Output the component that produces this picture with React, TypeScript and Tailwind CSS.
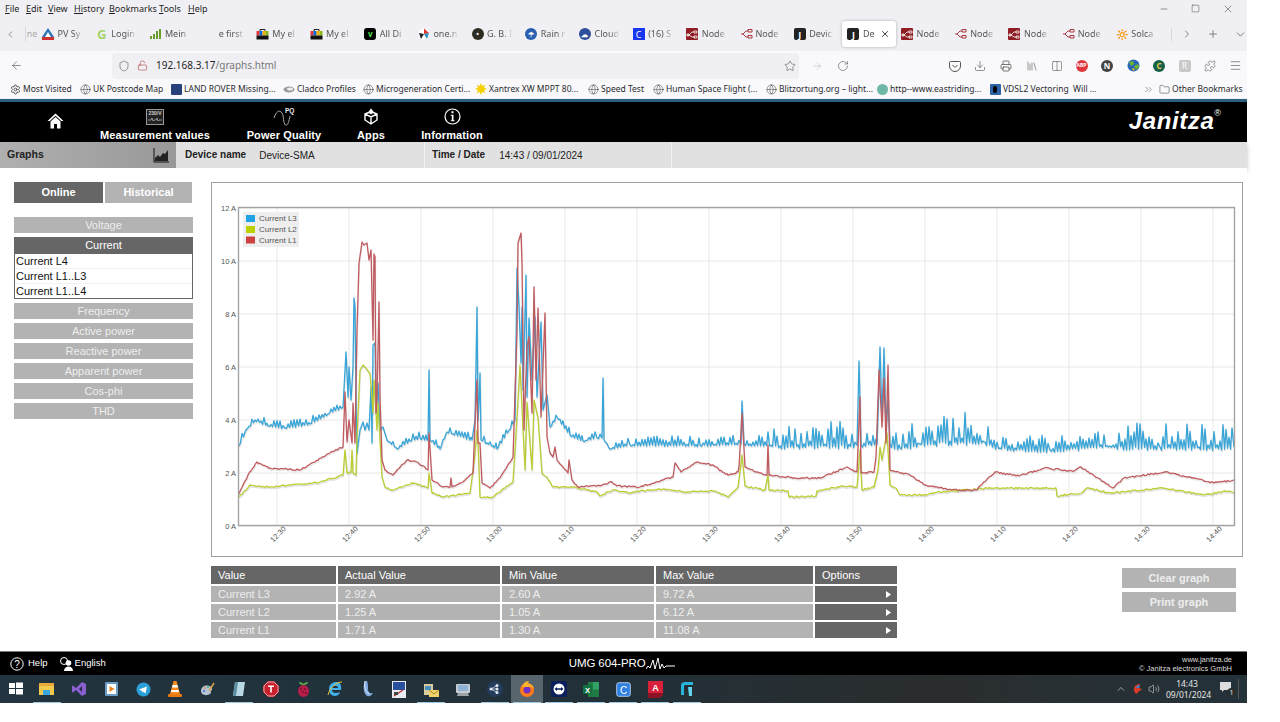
import React from "react";
import { ArrowLeft, ArrowRight, ChevronDown, ChevronLeft, ChevronRight, ChevronUp, ChevronsRight, Download, Folder, Globe, Menu, Minus, Plus, Printer, RotateCw, Settings, Shield, Square, Star, Volume2, X, Puzzle, LockOpen, Columns2, Library } from "lucide-react";

type P = [number, number];

function rng(seed: number) {
  let s = seed;
  return () => {
    s = (s * 16807) % 2147483647;
    return (s - 1) / 2147483646;
  };
}
function lerp(k: P[], x: number) {
  for (let i = 1; i < k.length; i++) {
    if (x <= k[i][0]) {
      const [a, b] = k[i - 1];
      const [c, d] = k[i];
      return c === a ? d : b + ((d - b) * (x - a)) / (c - a);
    }
  }
  return k[k.length - 1][1];
}
function series(k: P[], seed: number, amp: (x: number, i: number) => number, mode: "both" | "up") {
  const r = rng(seed);
  const out: string[] = [];
  for (let i = 1; i < k.length; i++) {
    const [a, b] = k[i - 1];
    const [c, d] = k[i];
    out.push(`${a},${b.toFixed(1)}`);
    if (c - a > 4) {
      let n = 0;
      for (let x = a + 1.5; x < c - 0.5; x += 1.5) {
        n++;
        const base = b + ((d - b) * (x - a)) / (c - a);
        const A = amp(x, n);
        const dy = mode === "up" ? (n % 2 === 0 ? -A * r() : A * 0.15 * r()) : (r() - 0.5) * A;
        out.push(`${x.toFixed(1)},${(base + dy).toFixed(1)}`);
      }
    }
  }
  const l = k[k.length - 1];
  out.push(`${l[0]},${l[1]}`);
  return out.join(" ");
}

const blueK: P[] = [[239,446],[246,430],[255,420],[268,426],[285,428],[310,424],[328,414],[343,407],[346,352],[348,397],[349,367],[351,400],[353,367],[354,298],[355,307],[356,397],[357,453],[360,430],[363,422],[365,430],[367,423],[369,430],[371,387],[372,443],[373,345],[375,343],[376,413],[378,383],[380,430],[383,427],[387,440],[397,449],[410,441],[420,438],[427,440],[428,440],[429,370],[430,440],[440,449],[447,432],[472,440],[475,420],[477,307],[478,420],[479,400],[480,373],[481,440],[487,443],[497,449],[513,424],[515,420],[517,268],[519,307],[521,363],[522,307],[523,390],[526,275],[527,397],[529,318],[532,380],[535,317],[537,397],[541,322],[543,410],[547,395],[550,427],[557,417],[570,435],[583,441],[597,438],[602,438],[603,378],[604,440],[610,449],[630,445],[700,445],[741,444],[742,401],[744,444],[780,446],[857,445],[859,361],[861,445],[877,444],[880,347],[882,420],[884,348],[886,430],[888,400],[890,445],[900,448],[920,444],[950,441],[985,442],[1000,448],[1050,450],[1110,446],[1160,447],[1234,447]];
const ampBlue = (x: number) => (x < 640 ? 7 : lerp([[640,10],[760,10],[770,24],[850,24],[870,10],[910,22],[950,32],[985,26],[1000,18],[1110,18],[1115,24],[1234,24]], x));
const redK: P[] = [[239,494],[248,475],[257,462],[270,468],[300,470],[330,453],[343,447],[345,392],[347,442],[349,420],[352,443],[353,403],[355,443],[357,330],[359,263],[362,242],[364,245],[367,243],[369,260],[371,250],[373,340],[374,254],[375,257],[376,413],[377,397],[379,302],[380,397],[382,460],[385,470],[393,475],[407,460],[417,462],[428,470],[429,433],[432,480],[443,487],[450,487],[451,478],[452,487],[463,482],[467,478],[473,473],[475,423],[477,380],[478,443],[480,443],[482,483],[490,488],[500,478],[513,457],[517,330],[518,243],[521,233],[522,263],[524,430],[527,347],[529,337],[532,413],[534,287],[536,380],[538,308],[541,417],[545,313],[547,437],[550,453],[553,457],[555,447],[557,460],[568,473],[569,460],[572,480],[578,487],[597,486],[612,482],[617,486],[640,487],[663,480],[673,477],[675,463],[681,472],[697,462],[712,465],[728,475],[738,472],[739,467],[742,413],[745,467],[757,472],[767,475],[768,445],[769,475],[794,478],[820,478],[847,467],[857,472],[860,397],[861,473],[874,472],[876,457],[879,370],[882,427],[884,378],[886,443],[888,365],[890,470],[910,475],[925,485],[952,490],[976,490],[995,472],[1019,476],[1044,468],[1074,471],[1081,467],[1113,488],[1124,478],[1165,472],[1214,483],[1234,480]];
const greenK: P[] = [[239,497],[250,485],[270,487],[290,485],[320,482],[343,475],[345,450],[347,473],[351,472],[352,450],[353,473],[356,475],[357,437],[360,370],[363,365],[370,373],[373,413],[374,380],[377,430],[378,403],[382,477],[385,487],[393,490],[413,483],[428,488],[429,473],[432,493],[443,497],[470,493],[474,463],[477,430],[478,443],[480,497],[493,497],[513,482],[517,417],[520,365],[523,430],[525,470],[527,402],[532,470],[534,400],[538,418],[542,473],[547,477],[553,487],[573,487],[597,492],[600,496],[613,490],[630,493],[640,491],[663,489],[687,492],[714,491],[728,497],[738,487],[742,455],[745,486],[765,490],[768,475],[769,490],[788,491],[789,497],[816,496],[817,491],[843,486],[857,487],[860,450],[862,490],[874,487],[878,470],[880,447],[882,460],[887,433],[890,485],[896,488],[900,495],[927,495],[937,492],[992,488],[1056,488],[1057,496],[1081,493],[1087,488],[1111,493],[1163,488],[1204,495],[1226,491],[1234,493]];
const blue = series(blueK, 12345, ampBlue, "up");
const red = series(redK, 777, () => 1.6, "both");
const green = series(greenK, 4242, () => 1.6, "both");

const gridX = [277,349,421,493,565,637,709,781,853,925,997,1069,1141,1213];
const labels = ["12:30","12:40","12:50","13:00","13:10","13:20","13:30","13:40","13:50","14:00","14:10","14:20","14:30","14:40"];
const gridY: [number, string][] = [[208,"12 A"],[261,"10 A"],[314,"8 A"],[367,"6 A"],[420,"4 A"],[473,"2 A"],[526,"0 A"]];

function Chart() {
  return (
    <svg width="1030" height="373" viewBox="212 183 1030 373" className="block">
      {gridX.map((x) => <line key={x} x1={x} x2={x} y1={208} y2={525} stroke="#e8e8e8" />)}
      {gridY.map(([y]) => <line key={y} x1={238} x2={1234} y1={y} y2={y} stroke="#e8e8e8" />)}
      <g fill="none" strokeLinejoin="round">
        <polyline points={blue} transform="translate(0.5,1.5)" stroke="#000" strokeOpacity="0.12" strokeWidth="1.4" />
        <polyline points={green} transform="translate(0.5,1.5)" stroke="#000" strokeOpacity="0.12" strokeWidth="1.4" />
        <polyline points={red} transform="translate(0.5,1.5)" stroke="#000" strokeOpacity="0.08" strokeWidth="1.4" />
        <polyline points={blue} stroke="#38a5d8" strokeWidth="1.3" />
        <polyline points={green} stroke="#bccd33" strokeWidth="1.3" />
        <polyline points={red} stroke="#bf5a5e" strokeWidth="1.3" />
      </g>
      <rect x="238.5" y="207.5" width="996" height="318" fill="none" stroke="#a3a3a3" strokeWidth="1.4" />
      <g fontFamily="'Liberation Sans', sans-serif" fontSize="7.5" fill="#555">
        {gridY.map(([y, t]) => <text key={t} x="236" y={y + 2.5} textAnchor="end">{t}</text>)}
        {gridX.map((x, i) => <text key={x} x={x + 2} y={538} textAnchor="middle" transform={`rotate(-45 ${x} 536)`}>{labels[i]}</text>)}
      </g>
      <rect x="243" y="212" width="56" height="35" fill="#eeeeee" />
      {[["#1fa5e6","Current L3",218],["#bdd000","Current L2",229],["#cc4040","Current L1",239.5]].map(([c, t, y]) => (
        <g key={t as string}>
          <rect x="246" y={(y as number) - 3} width="9" height="7" fill={c as string} />
          <text x="259" y={(y as number) + 3} fontFamily="'Liberation Sans', sans-serif" fontSize="8" fill="#555">{t as string}</text>
        </g>
      ))}
    </svg>
  );
}

const Nodered = () => (
  <svg width="12" height="12" viewBox="0 0 12 12"><rect width="12" height="12" rx="1" fill="#8f1d24" /><path d="M1 7h2l3-3h2M3 7l3 2h3M8 3h3v2H8zM1 6h2v2H1zM8 8h3v2H8z" stroke="#fff" strokeWidth=".8" fill="none" /></svg>
);
const NodeLine = () => (
  <svg width="13" height="12" viewBox="0 0 13 12"><path d="M1 6h2l3-3h2M3 6l3 3h2M8 1.5h4v2.5H8zM8 7.5h4V10H8z" stroke="#a3242c" strokeWidth=".9" fill="none" /></svg>
);
const J = () => (
  <span className="flex h-3 w-3 items-center justify-center rounded-[2px] bg-[#222] text-[9px] font-bold leading-none text-white">J</span>
);
const Bag = () => (
  <svg width="13" height="12" viewBox="0 0 13 12"><path d="M4 3V1.5h5V3" stroke="#222" fill="none" /><rect x="0.5" y="3" width="3" height="4.5" fill="#e53238" /><rect x="3.5" y="3" width="3" height="4.5" fill="#0064d2" /><rect x="6.5" y="3" width="3" height="4.5" fill="#f5af02" /><rect x="9.5" y="3" width="3" height="4.5" fill="#86b817" /><rect x="0.5" y="7.5" width="12" height="4" fill="#111" /></svg>
);
const Round = ({ c, i }: { c: string; i?: string }) => (
  <span className="flex h-3 w-3 items-center justify-center rounded-full text-[7px] font-bold leading-none text-white" style={{ background: c }}>{i}</span>
);

const tabs: [React.ReactNode, string][] = [
  [<svg width="12" height="12" viewBox="0 0 12 12"><path d="M6 0l6 9H0z" fill="#2c72b8" /><path d="M0 9h12v3H0z" fill="#d22f2f" /><path d="M6 4l3 5H3z" fill="#fff" /></svg>, "PV Sy"],
  [<span className="text-[13px] font-bold leading-none text-[#a3d36a]">G</span>, "Login"],
  [<svg width="12" height="12" viewBox="0 0 12 12"><path d="M1 8h2v3H1zM4 6h2v5H4zM7 3h2v8H7zM10 1h2v10h-2z" fill="#6a9e2c" /></svg>, "Mein"],
  [<span className="w-3" />, "e first"],
  [<Bag />, "My el"],
  [<Bag />, "My el"],
  [<span className="flex h-3 w-3 items-center justify-center rounded-[3px] bg-black text-[8px] font-bold leading-none text-[#52e052]">v</span>, "All Di"],
  [<svg width="12" height="12" viewBox="0 0 12 12"><circle cx="6" cy="6" r="5.5" fill="#fff" /><path d="M6 .5L11 5 6 6z" fill="#e0362c" /><path d="M1 5l5 1-3 5z" fill="#222" /><path d="M6 6l5-1-2 6z" fill="#2b8fbf" /></svg>, "one.n"],
  [<Round c="#2c2c22" i="•" />, "G. B. I"],
  [<Round c="#2a5fb0" i="☂" />, "Rain r"],
  [<Round c="#2c4f9a" i="☁" />, "Cloud"],
  [<span className="flex h-3 w-3 items-center justify-center bg-[#1736f0] text-[9px] leading-none text-white">C</span>, "(16) S"],
  [<Nodered />, "Node"],
  [<NodeLine />, "Node"],
  [<J />, "Devic"],
  [<J />, "De"],
  [<Nodered />, "Node"],
  [<NodeLine />, "Node"],
  [<Nodered />, "Node"],
  [<NodeLine />, "Node"],
  [<span className="text-[10px] leading-none">🔆</span>, "Solca"],
];

const chromeFont = "font-['Noto_Sans',sans-serif]";

function TopBar() {
  return (
    <div className={`${chromeFont} text-[#1f1f24]`}>
      <div className="flex h-[17px] items-center bg-[#f0f0f4] pl-[5px] text-[9px]">
        {[["F","ile",21],["E","dit",22],["V","iew",26],["Hi","story",35],["B","ookmarks",50],["T","ools",29],["H","elp",24]].map(([a, b, w]) => (
          <span key={b as string} style={{ width: w as number }}><span className="underline">{a}</span>{b}</span>
        ))}
        <div className="ml-auto flex items-center gap-[22px] pr-[13px] text-[#333]">
          <Minus size={10} strokeWidth={1.2} />
          <Square size={9} strokeWidth={1.2} />
          <X size={12} strokeWidth={1} />
        </div>
      </div>
      <div className="flex h-[34px] items-center bg-[#f0f0f4] text-[9px]">
        <ChevronLeft size={13} strokeWidth={1.3} className="ml-[5px] text-[#444]" />
        <span className="ml-[9px] w-[20px] border-l border-[#d8d8dc] pl-[1px] text-[#aaa]">ne</span>
        <div className="flex">
          {tabs.map(([ic, t], i) => (
            <div key={i} className={i === 15 ? "-ml-[5px] mr-[5px] flex h-[26px] w-[53.7px] items-center gap-[3px] rounded-[3px] bg-white pl-[5px] shadow-[0_0_3px_rgba(0,0,0,0.3)]" : "flex h-[26px] w-[53.7px] items-center gap-[3px]"}>
              <span className="flex w-[13px] shrink-0 items-center justify-center">{ic}</span>
              <span className="w-[26px] overflow-hidden whitespace-nowrap text-[#555] [mask-image:linear-gradient(90deg,#000_60%,transparent)]">{t}</span>
              {i === 15 && <X size={10} strokeWidth={2} className="-ml-[12px] shrink-0 text-[#222]" />}
            </div>
          ))}
        </div>
        <div className="ml-[2px] flex items-center border-l border-[#d8d8dc] pl-[9px] text-[#444]">
          <ChevronRight size={12} strokeWidth={1.3} />
          <Plus size={12} strokeWidth={1.2} className="ml-[14px]" />
          <ChevronDown size={13} strokeWidth={1.2} className="ml-[15px]" />
        </div>
      </div>
      <div className="flex h-[29px] items-center bg-[#f9f9fb] text-[#555]">
        <ArrowLeft size={13} strokeWidth={1.2} className="ml-[10px]" />
        <div className="ml-[89px] flex h-[26px] w-[688px] items-center rounded-[4px] bg-[#f0f0f4] text-[10px]">
          <Shield size={12} strokeWidth={1.2} className="ml-[6px]" />
          <LockOpen size={11} strokeWidth={1.2} className="ml-[7px] text-[#a33]" />
          <span className="ml-[8px] text-[#1f1f24]">192.168.3.17<span className="text-[#777]">/graphs.html</span></span>
          <Star size={12} strokeWidth={1.2} className="ml-auto mr-[3px]" />
        </div>
        <ArrowRight size={12} strokeWidth={1.2} className="ml-[12px] text-[#bbb]" />
        <RotateCw size={12} strokeWidth={1.2} className="ml-[14px]" />
        <div className="ml-[93px] flex items-center">
          <span className="flex w-[25px] justify-center"><svg width="12" height="12" viewBox="0 0 12 12"><path d="M1.5 1.5h9a1 1 0 011 1V6a5.5 5.5 0 01-11 0V2.500a1 1 0 011-1zM3.500 5L6 7.500 8.500 5" fill="none" stroke="#555" /></svg></span>
          <span className="flex w-[26px] justify-center"><Download size={12} strokeWidth={1.3} /></span>
          <span className="flex w-[26px] justify-center"><Printer size={12} strokeWidth={1.6} /></span>
          <span className="flex w-[25px] justify-center"><Library size={12} strokeWidth={1.2} /></span>
          <span className="flex w-[25px] justify-center"><Columns2 size={12} strokeWidth={1.2} /></span>
          <span className="flex w-[25px] justify-center"><span className="flex h-[12px] w-[12px] items-center justify-center rounded-full bg-[#e0343c] text-[5px] font-bold text-white">ABP</span></span>
          <span className="flex w-[26px] justify-center"><span className="flex h-[12px] w-[12px] items-center justify-center rounded-full bg-[#444] text-[8px] font-bold text-white">N</span></span>
          <span className="flex w-[26px] justify-center"><svg width="13" height="13" viewBox="0 0 13 13"><circle cx="6.500" cy="6.500" r="6" fill="#2a66b8" /><path d="M2 3l4-1 1 3-3 2zM7 7l4-2 1 3-3 3z" fill="#6fb52c" /><path d="M5 9l3 1-2 2z" fill="#f0c419" /></svg></span>
          <span className="flex w-[26px] justify-center"><span className="flex h-[12px] w-[12px] items-center justify-center rounded-full bg-[#17614a] text-[8px] font-bold text-[#e5c84a]">C</span></span>
          <span className="flex w-[25px] justify-center"><span className="flex h-[12px] w-[12px] items-center justify-center rounded-[2px] bg-[#c9c9c9] text-[8px] text-white">R</span></span>
          <span className="flex w-[26px] justify-center"><Puzzle size={12} strokeWidth={1.2} /></span>
          <span className="flex w-[24px] justify-center"><Menu size={13} strokeWidth={1.2} /></span>
        </div>
      </div>
      <div className="flex h-[18px] items-center bg-[#f9f9fb] pl-[9px] text-[8.5px] leading-none text-[#2a2a2e]">
        <BM w={70} i={<Settings size={11} strokeWidth={1.6} />} t="Most Visited" />
        <BM w={91} i={<Globe size={11} strokeWidth={1} />} t="UK Postcode Map" />
        <BM w={113} i={<span className="block h-[11px] w-[11px] rounded-[1px] bg-[#28407c]" />} t="LAND ROVER Missing..." />
        <BM w={79} i={<svg width="12" height="9" viewBox="0 0 12 9"><ellipse cx="6" cy="4.500" rx="5.500" ry="3" fill="#999" /><ellipse cx="7" cy="4" rx="3" ry="1.500" fill="#eee" /></svg>} t="Cladco Profiles" />
        <BM w={113} i={<Globe size={11} strokeWidth={1} />} t="Microgeneration Certi..." />
        <BM w={112} i={<svg width="12" height="12" viewBox="0 0 12 12"><path d="M6 0l1.300 3 3-1.300L9 4.700l3 1.300-3 1.300 1.300 3-3-1.300L6 12l-1.300-3-3 1.300L3 7.300 0 6l3-1.300-1.300-3 3 1.300z" fill="#f6d000" /></svg>} t="Xantrex XW MPPT 80..." />
        <BM w={65} i={<Globe size={11} strokeWidth={1} />} t="Speed Test" />
        <BM w={113} i={<Globe size={11} strokeWidth={1} />} t="Human Space Flight (..." />
        <BM w={111} i={<Globe size={11} strokeWidth={1} />} t="Blitzortung.org – light..." />
        <BM w={113} i={<span className="block h-[11px] w-[11px] rounded-full bg-[#6fb8a8]" />} t="http--www.eastriding..." />
        <BM w={154} i={<span className="flex h-[11px] w-[11px] items-center justify-center rounded-[1px] bg-[#2c62a8]"><span className="block h-[7px] w-[4px] rounded-full bg-black" /></span>} t="VDSL2 Vectoring  Will ..." />
        <ChevronsRight size={11} strokeWidth={1.2} className="text-[#555]" />
        <Folder size={11} strokeWidth={1.1} className="ml-[5px] text-[#333]" />
        <span className="ml-[2px] whitespace-nowrap">Other Bookmarks</span>
      </div>
    </div>
  );
}

function BM({ w, i, t }: { w: number; i: React.ReactNode; t: string }) {
  return (
    <div className="flex items-center gap-[2px] whitespace-pre" style={{ width: w }}>
      <span className="flex w-[12px] shrink-0 justify-center">{i}</span>
      <span>{t}</span>
    </div>
  );
}

function NavItem({ w, icon, label }: { w: number; icon: React.ReactNode; label: string }) {
  return (
    <div className="flex shrink-0 flex-col items-center" style={{ width: w }}>
      <div className="flex h-[23px] items-center justify-center">{icon}</div>
      <span className="mt-[1px] whitespace-nowrap text-[11px] font-bold leading-[13px] tracking-[0.1px] text-white">{label}</span>
    </div>
  );
}

function Header() {
  return (
    <div className="font-['Liberation_Sans',Arial,sans-serif]">
      <div className="h-[4px] bg-[linear-gradient(#f0f0f4_25%,#2b5f7e_25%)]" />
      <div className="flex h-[40px] items-start bg-black pt-[3px]">
        <div className="ml-[46px] flex h-[32px] w-[18px] items-center justify-center">
          <svg width="17" height="16" viewBox="0 0 17 16"><path d="M8.500 0.500L0.500 8h2.300l5.700-5.200L14.200 8h2.300z" fill="#fff" /><path d="M3.500 8.500L8.500 4l5 4.500V15.500H10V11H7v4.500H3.500z" fill="#fff" /></svg>
        </div>
        <div className="ml-[35px]">
          <NavItem w={112} label="Measurement values" icon={
            <svg width="18" height="16" viewBox="0 0 18 16"><rect x=".5" y=".5" width="17" height="15" fill="#222" stroke="#999" /><text x="9" y="6" textAnchor="middle" fontSize="5" fontWeight="700" fill="#ccc" fontFamily="'Liberation Sans', sans-serif">230/V</text><path d="M2 11h3l1-2 1 3 1-1h2l1-2 1 3 1-1h3" stroke="#bbb" strokeWidth=".7" fill="none" /></svg>
          } />
        </div>
        <div className="ml-[35px]">
          <NavItem w={76} label="Power Quality" icon={
            <svg width="22" height="20" viewBox="0 0 22 20"><path d="M1 11C3 5 6 2 9 6c2 3 1 10 3.500 12C15 19 16 14 17 9" stroke="#bbb" strokeWidth=".9" fill="none" /><text x="12" y="6" fontSize="6.500" fontWeight="700" fill="#eee" fontFamily="'Liberation Sans', sans-serif">PQ</text></svg>
          } />
        </div>
        <div className="ml-[35px]">
          <NavItem w={28} label="Apps" icon={
            <svg width="16" height="18" viewBox="0 0 16 18"><path d="M8 1.500l2 2.500-2 1.500L6 4zM2 6l6-2.500L14 6v6l-6 4-6-4zM2 6l6 3 6-3M8 9v7" stroke="#fff" strokeWidth="1.400" fill="none" /></svg>
          } />
        </div>
        <div className="ml-[36px]">
          <NavItem w={62} label="Information" icon={
            <svg width="17" height="17" viewBox="0 0 17 17"><circle cx="8.500" cy="8.500" r="7.500" stroke="#fff" strokeWidth="1.200" fill="none" /><rect x="7.500" y="3.200" width="2" height="2" fill="#fff" /><path d="M6.800 6.800h2.700v5.500h1v1H6.800v-1h1V7.800h-1z" fill="#fff" /></svg>
          } />
        </div>
        <div className="ml-auto mr-[26px] mt-[1px] flex h-[32px] items-start">
          <span className="text-[24px] font-bold italic leading-[30px] tracking-[0.6px] text-white">Janitza</span>
          <span className="mt-[3px] text-[9px] leading-none text-white">®</span>
        </div>
      </div>
      <div className="flex h-[26px] bg-[#e1e1e1] text-[10px] text-[#222] shadow-[0_3px_4px_rgba(0,0,0,0.25)]">
        <div className="flex w-[176px] items-center justify-between bg-[linear-gradient(90deg,#b0b0b0,#989898)] pl-[7px] pr-[7px] font-bold text-[#222]">
          <span className="text-[10.500px]">Graphs</span>
          <svg width="16" height="15" viewBox="0 0 16 15"><path d="M1 0v14h15" stroke="#111" fill="none" /><path d="M2 13V10l3-3 2 2 3-4 2 1 3-4v11z" fill="#222" /></svg>
        </div>
        <div className="ml-[1px] flex w-[248px] items-center border-r border-[#f2f2f2] pl-[8px]">
          <span className="font-bold leading-none">Device name</span>
          <span className="ml-[13px] mt-[1px]">Device-SMA</span>
        </div>
        <div className="flex w-[247px] items-center border-r border-[#f2f2f2] pl-[7px]">
          <span className="font-bold leading-none">Time / Date</span>
          <span className="ml-[14px] mt-[1px]">14:43 / 09/01/2024</span>
        </div>
      </div>
    </div>
  );
}

const menuAbove = ["Voltage"];
const menuBelow = ["Frequency", "Active power", "Reactive power", "Apparent power", "Cos-phi", "THD"];

function Sidebar() {
  return (
    <div className="w-[179px] shrink-0 text-[11px] font-['Liberation_Sans',Arial,sans-serif]">
      <div className="flex gap-[2px] text-[11px] font-bold text-white">
        <div className="flex h-[21px] w-[89px] items-center justify-center bg-[#666]">Online</div>
        <div className="flex h-[21px] w-[87px] items-center justify-center bg-[#b3b3b3]">Historical</div>
      </div>
      <div className="mt-[14px]">
        {menuAbove.map((m) => <div key={m} className="flex h-[16px] items-center justify-center bg-[#b3b3b3] text-[#eee]">{m}</div>)}
      </div>
      <div className="mt-[4px] border border-[#666]">
        <div className="-m-px flex h-[17px] items-center justify-center bg-[#666] text-white">Current</div>
        <div className="mt-px bg-white text-[#111]">
          {["Current L4", "Current L1..L3", "Current L1..L4"].map((t, i) => (
            <div key={t} className={i < 2 ? "flex h-[15px] items-center border-b border-[#f2f2f2] pl-[1px]" : "flex h-[14px] items-center pl-[1px]"}>{t}</div>
          ))}
        </div>
      </div>
      <div className="mt-[4px] flex flex-col gap-[4px]">
        {menuBelow.map((m) => <div key={m} className="flex h-[16px] items-center justify-center bg-[#b3b3b3] text-[#eee]">{m}</div>)}
      </div>
    </div>
  );
}

const cols = ["w-[125px]", "w-[162px]", "w-[152px]", "w-[157px]"];
const rows = [
  ["Current L3", "2.92 A", "2.60 A", "9.72 A"],
  ["Current L2", "1.25 A", "1.05 A", "6.12 A"],
  ["Current L1", "1.71 A", "1.30 A", "11.08 A"],
];

function Table() {
  return (
    <div className="flex w-[686px] flex-col gap-[2px] text-[11px] font-['Liberation_Sans',Arial,sans-serif]">
      <div className="flex h-[18px] gap-[2px] bg-white text-white">
        {["Value", "Actual Value", "Min Value", "Max Value"].map((h, i) => (
          <div key={h} className={`${cols[i]} flex items-center bg-[#666] pl-[7px]`}>{h}</div>
        ))}
        <div className="flex w-[82px] items-center bg-[#666] pl-[7px]">Options</div>
      </div>
      {rows.map((r) => (
        <div key={r[0]} className="flex h-[16px] gap-[2px] text-[#eee]">
          {r.map((c, i) => (
            <div key={i} className={`${cols[i]} flex items-center bg-[#b3b3b3] pl-[7px]`}>{c}</div>
          ))}
          <div className="flex w-[82px] items-center justify-end bg-[#666] pr-[6px]">
            <svg width="5" height="7" viewBox="0 0 5 7"><path d="M0 0l5 3.500L0 7z" fill="#fff" /></svg>
          </div>
        </div>
      ))}
    </div>
  );
}

function Footer() {
  return (
    <div className="flex h-[24px] items-center border-t border-[#777] bg-black pl-[10px] pr-[15px] font-['Liberation_Sans',Arial,sans-serif] text-white">
      <svg width="14" height="14" viewBox="0 0 14 14"><circle cx="7" cy="7" r="6.200" stroke="#fff" fill="none" /><text x="7" y="10.500" textAnchor="middle" fontSize="10" fill="#fff" fontFamily="'Liberation Sans', sans-serif">?</text></svg>
      <span className="ml-[4px] text-[9.500px]">Help</span>
      <svg className="ml-[11px]" width="14" height="14" viewBox="0 0 14 14"><circle cx="5" cy="4" r="3.500" stroke="#fff" fill="none" /><circle cx="9.500" cy="6" r="2.800" fill="#fff" /><path d="M5 14c0-3 2-4.500 4.500-4.500S14 11 14 14z" fill="#fff" /></svg>
      <span className="ml-[2px] text-[9.500px]">English</span>
      <div className="ml-[463px] flex items-center">
        <span className="text-[11.500px] leading-none tracking-[-0.1px]">UMG 604-PRO</span>
        <svg width="30" height="16" viewBox="0 0 30 16"><path d="M0 13l2-3 2 2 3-8 2 9 3-11 2 11 2-5 2 4 2-2h9" stroke="#fff" fill="none" strokeWidth="1" /></svg>
      </div>
      <div className="ml-auto text-right text-[7.500px] leading-[9px] text-[#ddd]">
        <div>www.janitza.de</div>
        <div>© Janitza electronics GmbH</div>
      </div>
    </div>
  );
}

const taskIcons: [React.ReactNode, boolean, boolean?][] = [
  [<svg width="16" height="14" viewBox="0 0 16 14"><rect x="1" y="1" width="6" height="5" fill="#fff" /><rect x="8" y="0.500" width="7" height="5.500" fill="#fff" /><rect x="1" y="7" width="6" height="5" fill="#fff" /><rect x="8" y="7" width="7" height="5.500" fill="#fff" /></svg>, false],
  [<svg width="16" height="14" viewBox="0 0 16 14"><rect y="1" width="15" height="12" fill="#f2c94c" /><rect y="1" width="15" height="3" fill="#e8a93a" /><rect x="4" y="8" width="7" height="5" fill="#3ba7e0" /></svg>, true],
  [<svg width="16" height="16" viewBox="0 0 16 16"><path d="M11 1l4 2v10l-4 2-6-6-3 2.500L1 11V5l1-.500L5 7z" fill="#8a5fd0" /><path d="M11 5L8 8l3 3z" fill="#2a2a50" /></svg>, false],
  [<svg width="13" height="14" viewBox="0 0 13 14"><rect width="13" height="14" rx="1" fill="#6a9cc4" /><rect x="2" y="2" width="9" height="10" fill="#fff" /><path d="M4.500 4l5 3-5 3z" fill="#e8831e" /></svg>, false],
  [<svg width="15" height="15" viewBox="0 0 15 15"><circle cx="7.500" cy="7.500" r="7" fill="#2a9fd8" /><path d="M3 7.500l8-3-1.500 7-2.500-2-1 1.300V9z" fill="#fff" /></svg>, false],
  [<svg width="14" height="16" viewBox="0 0 14 16"><path d="M5.500 0h3L12 13H2z" fill="#f58a1f" /><path d="M4.600 4h4.800l.6 2.500H4zM3.500 9h7l.6 2H2.900z" fill="#fff" /><rect y="13" width="14" height="3" rx="1" fill="#e87a10" /></svg>, false],
  [<svg width="15" height="15" viewBox="0 0 15 15"><path d="M1 9c0-5 6-7 10-4 3 3-1 3 0 6-4 4-10 2-10-2z" fill="#b5c3d6" /><circle cx="5" cy="6" r="1" fill="#d84" /><circle cx="8" cy="5" r="1" fill="#4a8" /><circle cx="4" cy="9" r="1" fill="#46c" /><path d="M9 9l5-8" stroke="#d9a441" strokeWidth="1.500" /></svg>, false],
  [<svg width="14" height="16" viewBox="0 0 14 16"><path d="M3 1h10l-2 14H1z" fill="#b8d8e4" /><path d="M3 1h3L4 15H1z" fill="#5a8ea0" /></svg>, true],
  [<svg width="16" height="16" viewBox="0 0 16 16"><path d="M5 0h6l5 5v6l-5 5H5l-5-5V5z" fill="#c8202c" /><path d="M5 1h6l4 4v6l-4 4H5l-4-4V5z" fill="none" stroke="#fff" strokeWidth=".6" /><path d="M5 4.500h6v1.500H8.800v5.500H7.200V6H5z" fill="#fff" /></svg>, false],
  [<svg width="13" height="16" viewBox="0 0 13 16"><path d="M2 1c2 0 4 1 4.500 2C7 2 9 1 11 1c0 2-2 3-4.500 3S2 3 2 1z" fill="#5cb04a" /><ellipse cx="6.500" cy="10" rx="5.500" ry="6" fill="#b51d4a" /><circle cx="4" cy="8" r="1" fill="#7a0f30" /><circle cx="8" cy="8" r="1" fill="#7a0f30" /><circle cx="6" cy="11" r="1" fill="#7a0f30" /><circle cx="9" cy="12" r="1" fill="#7a0f30" /></svg>, false],
  [<svg width="16" height="16" viewBox="0 0 16 16"><path d="M14 9H5c0 3 4 4 8 2-1 3-3 4-5 4-4 0-6-3-6-7s3-7 7-7c3 0 6 2 5 8zM5 7h6c0-3-5-3-6 0z" fill="#3fb0ea" /><path d="M1 14c2-8 9-13 14-13" stroke="#f2c230" strokeWidth="1" fill="none" /></svg>, false],
  [<svg width="13" height="16" viewBox="0 0 13 16"><path d="M4 0C2 5 2 12 6 15c3 1 5-1 6-3-3 1-5-1-5-4s0-6-1-8z" fill="#7fa9e0" /><path d="M4 0C3 5 4 11 8 13" stroke="#e3edf8" fill="none" /></svg>, false],
  [<svg width="14" height="17" viewBox="0 0 14 17"><rect width="14" height="17" fill="#e8ecf2" /><rect x="1" y="1" width="12" height="8" fill="#2a4f9c" /><path d="M2 15l9-6" stroke="#c03030" strokeWidth="1.400" /><rect x="2" y="11" width="4" height="3" fill="#444" /></svg>, false],
  [<svg width="16" height="15" viewBox="0 0 16 15"><path d="M1 2h9v11H1z" fill="#d9cda0" /><path d="M2 4h6v4H2z" fill="#4a90c0" /><path d="M6 8h10v7H6z" fill="#f2d36a" /><path d="M6 8l5 4 5-4" stroke="#a88a30" fill="none" /></svg>, true],
  [<svg width="16" height="15" viewBox="0 0 16 15"><rect x="1" y="2" width="14" height="9" rx="1" fill="#c8ccd2" /><rect x="3" y="3" width="10" height="6" fill="#8eb2d4" /><path d="M3 11h10l1 3H2z" fill="#9ca2a8" /></svg>, false],
  [<svg width="16" height="16" viewBox="0 0 16 16"><circle cx="8" cy="8" r="8" fill="#233c5c" /><circle cx="4" cy="8" r="1.500" fill="#dfe8f0" /><circle cx="10" cy="4.500" r="1.500" fill="#dfe8f0" /><circle cx="10" cy="8" r="1.500" fill="#dfe8f0" /><circle cx="10" cy="11.500" r="1.500" fill="#dfe8f0" /><path d="M4 8l6-3.500M4 8h6M4 8l6 3.500" stroke="#dfe8f0" strokeWidth=".7" /></svg>, true],
  [<svg width="16" height="16" viewBox="0 0 16 16"><circle cx="8" cy="9" r="7" fill="#ff7a1a" /><circle cx="8" cy="9" r="3.500" fill="#6e2fc4" /><path d="M3 6c1-4 4-6 7-6-1 1-1 2 0 3 3 0 5 3 5 6 0-2-3-4-6-3-2 0-4 0-6 0z" fill="#ffb22c" /></svg>, true, true],
  [<svg width="16" height="16" viewBox="0 0 16 16"><rect width="16" height="16" rx="2" fill="#0b1f5c" /><circle cx="8" cy="8" r="5.500" fill="#fff" /><path d="M3.500 8l2.500-2v1.300h4V6l2.500 2-2.500 2V8.700H6V10z" fill="#0b1f5c" /></svg>, true],
  [<svg width="16" height="15" viewBox="0 0 16 15"><rect x="5" width="11" height="15" fill="#1f7a44" /><rect x="10" width="6" height="7.500" fill="#33a265" /><rect y="3" width="9" height="9" fill="#107040" /><text x="4.500" y="10.500" textAnchor="middle" fontSize="7.500" fontWeight="700" fill="#fff" fontFamily="'Liberation Sans', sans-serif">X</text></svg>, true],
  [<svg width="15" height="15" viewBox="0 0 15 15"><rect x=".7" y=".7" width="13.600" height="13.600" rx="2" fill="#2f7fe0" stroke="#cfe2fa" strokeWidth=".8" /><text x="7.500" y="11.500" textAnchor="middle" fontSize="10" fill="#fff" fontFamily="'Liberation Sans', sans-serif">C</text></svg>, true],
  [<svg width="15" height="17" viewBox="0 0 15 17"><path d="M0 0h15v14l-4 3H0z" fill="#d8203a" /><path d="M0 12h15v2l-4 3H0z" fill="#8c1226" /><text x="7.500" y="10" textAnchor="middle" fontSize="9" fontWeight="700" fill="#fff" fontFamily="'Liberation Sans', sans-serif">A</text></svg>, true],
  [<svg width="14" height="14" viewBox="0 0 14 14"><path d="M1 13V3c0-2 2-3 4-3h8v3H6c-1 0-2 0-2 2v8z" fill="#28b4d8" /><path d="M8 5h4v9H9z" fill="#5fd4ec" /></svg>, true],
];

function Taskbar() {
  return (
    <div className="flex h-[28px] items-stretch bg-[linear-gradient(90deg,#22343f,#223038_50%,#2a2d2e_75%,#24323a)] font-['Noto_Sans',sans-serif] text-white">
      <div className="flex">
        <div className="w-[0px]" />
        {taskIcons.map(([ic, run, active], i) => (
          <div key={i} className={`relative flex items-center justify-center ${i === 0 ? "w-[31px]" : "w-[32px]"} ${active ? "bg-[#59656c]" : ""}`}>
            {ic}
            {run && <span className="absolute bottom-0 left-[2px] right-[2px] h-[1.500px] bg-[#9dc9e4]" />}
          </div>
        ))}
      </div>
      <div className="ml-auto flex items-center pr-[8px] text-[#e6e6e6]">
        <ChevronUp size={12} strokeWidth={1.2} />
        <svg className="ml-[5px]" width="11" height="12" viewBox="0 0 11 12"><path d="M2 8c-1-4 2-7 6-7L7 5l3 1-6 5z" fill="#d83a22" /><path d="M5 3l3-1-1 3H4z" fill="#3a84d8" /></svg>
        <Volume2 size={12} strokeWidth={1.1} className="ml-[5px]" />
        <div className="ml-[6px] w-[42px] text-center text-[8.500px] leading-[11px]">
          <div>14:43</div>
          <div className="whitespace-nowrap">09/01/2024</div>
        </div>
        <div className="relative ml-[12px] h-[14px] w-[14px]">
          <svg width="11" height="11" viewBox="0 0 11 11"><path d="M0 0h11v8H4L2 10V8H0z" fill="#ddd" /></svg>
          <span className="absolute bottom-[-1px] right-[-2px] flex h-[9px] w-[9px] items-center justify-center rounded-full bg-[#2a2d2e] text-[7px] leading-none">1</span>
        </div>
        <div className="ml-[4px] h-[20px] w-px bg-[#555]" />
      </div>
    </div>
  );
}

export default function App() {
  return (
    <div className="h-[722px] w-[1280px] overflow-hidden bg-white">
      <div className="flex h-[703px] w-[1247px] flex-col">
        <TopBar />
        <Header />
        <main className="flex h-[483px] flex-col bg-white pl-[14px]">
          <div className="mt-[14px] flex gap-[18px]">
            <Sidebar />
            <div className="h-[375px] w-[1032px] border border-[#a0a0a0] bg-white">
              <Chart />
            </div>
          </div>
          <div className="mt-[9px] flex pl-[197px] pr-[11px]">
            <Table />
            <div className="ml-auto mt-[2px] flex w-[114px] flex-col gap-[4px] font-['Liberation_Sans',Arial,sans-serif] text-[11px] font-bold text-[#eee]">
              <div className="flex h-[20px] items-center justify-center bg-[#b3b3b3]">Clear graph</div>
              <div className="flex h-[20px] items-center justify-center bg-[#b3b3b3]">Print graph</div>
            </div>
          </div>
        </main>
        <Footer />
        <Taskbar />
      </div>
    </div>
  );
}
